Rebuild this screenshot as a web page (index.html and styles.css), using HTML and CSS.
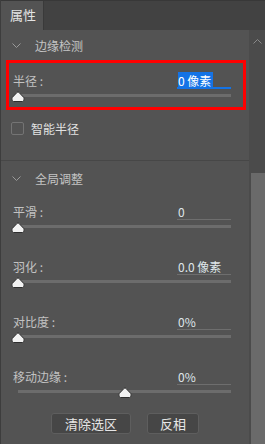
FILE: index.html
```html
<!DOCTYPE html>
<html lang="zh-CN">
<head>
    <meta charset="UTF-8">
    <meta name="viewport" content="width=device-width, initial-scale=1.0">
    <title>属性</title>
    <link rel="stylesheet" href="styles.css">
</head>
<body>
    <div class="panel">
        <!-- Tab -->
        <div class="tabbar">
            <div class="tab">属性</div>
        </div>

        <div class="panel-body">
            <div class="content">
                <!-- 边缘检测 -->
                <div class="section-head">
                    <svg class="chevron" width="9" height="5" viewBox="0 0 9 5"><polyline points="0.5,0.5 4.5,4.5 8.5,0.5" fill="none" stroke="#9a9a9a" stroke-width="1"/></svg>
                    <span>边缘检测</span>
                </div>

                <div class="highlight">
                    <div class="field field-boxed">
                        <div class="field-top">
                            <span class="label">半径 :</span>
                            <span class="value value-active"><span class="selected">0 像素</span></span>
                        </div>
                        <div class="slider">
                            <div class="track"></div>
                            <svg class="thumb" style="left: 0%" width="13" height="11" viewBox="0 0 13 11"><path d="M6.5 1 Q7 1 7.6 1.6 L12 6.2 Q12.5 6.7 12.5 7.5 V9 Q12.5 10.5 11 10.5 H2 Q0.5 10.5 0.5 9 V7.5 Q0.5 6.7 1 6.2 L5.4 1.6 Q6 1 6.5 1Z" fill="#f2f2f2" stroke="#2e2e2e"/></svg>
                        </div>
                    </div>
                </div>

                <div class="check-row">
                    <span class="checkbox"></span>
                    <span>智能半径</span>
                </div>

                <div class="divider"></div>

                <!-- 全局调整 -->
                <div class="section-head section-head-tall">
                    <svg class="chevron" width="9" height="5" viewBox="0 0 9 5"><polyline points="0.5,0.5 4.5,4.5 8.5,0.5" fill="none" stroke="#9a9a9a" stroke-width="1"/></svg>
                    <span>全局调整</span>
                </div>

                <div class="fields" id="fields"></div>

                <div class="buttons">
                    <button class="btn btn-wide">清除选区</button>
                    <button class="btn">反相</button>
                </div>
            </div>

            <div class="scrollbar">
                <svg class="scroll-up" width="9" height="5" viewBox="0 0 9 5"><polyline points="0.5,4.5 4.5,0.5 8.5,4.5" fill="none" stroke="#8a8a8a" stroke-width="1"/></svg>
                <div class="scroll-thumb"></div>
            </div>
        </div>
    </div>

    <script>
        // Daftar slider di bagian 全局调整
        const fieldList = [
            { label: "平滑 :", value: "0", pos: 0 },
            { label: "羽化 :", value: "0.0 像素", pos: 0 },
            { label: "对比度 :", value: "0%", pos: 0 },
            { label: "移动边缘 :", value: "0%", pos: 50 }
        ];

        const thumbSvg = '<path d="M6.5 1 Q7 1 7.6 1.6 L12 6.2 Q12.5 6.7 12.5 7.5 V9 Q12.5 10.5 11 10.5 H2 Q0.5 10.5 0.5 9 V7.5 Q0.5 6.7 1 6.2 L5.4 1.6 Q6 1 6.5 1Z" fill="#f2f2f2" stroke="#2e2e2e"/>';

        function tampilkanFields() {
            const wrap = document.getElementById('fields');
            fieldList.forEach(f => {
                const item = document.createElement('div');
                item.className = 'field';
                item.innerHTML = `
                    <div class="field-top">
                        <span class="label">${f.label}</span>
                        <span class="value">${f.value}</span>
                    </div>
                    <div class="slider">
                        <div class="track"></div>
                        <svg class="thumb" style="left: ${f.pos}%" width="13" height="11" viewBox="0 0 13 11">${thumbSvg}</svg>
                    </div>
                `;
                wrap.appendChild(item);
            });
        }

        tampilkanFields();
    </script>
</body>
</html>
```

FILE: styles.css
```css
body {
    margin: 0;
    width: 265px;
    height: 444px;
    overflow: hidden;
    background-color: #535353;
    font-family: "Noto Sans CJK SC", "Noto Sans", sans-serif;
    font-size: 12px;
}
.panel {
    height: 444px;
    display: flex;
    flex-direction: column;
    border-left: 1px solid #3d3d3d;
}
.tabbar {
    height: 30px;
    flex: none;
    display: flex;
    background-color: #424242;
    border-top: 1px solid #383838;
    box-sizing: border-box;
}
.tab {
    width: 43px;
    background-color: #535353;
    color: #e4e4e4;
    font-size: 13px;
    padding-left: 9px;
    line-height: 28px;
    box-sizing: border-box;
    border-right: 1px solid #3a3a3a;
}
.panel-body {
    flex: 1;
    display: flex;
}
.content {
    width: 248px;
}
.section-head {
    height: 30px;
    display: flex;
    align-items: center;
    color: #c4c4c4;
    font-size: 12px;
}
.section-head-tall {
    height: 34px;
}
.chevron {
    margin-left: 11px;
    margin-right: 14px;
}
.highlight {
    height: 50px;
    margin-left: 5px;
    width: 240px;
    border: 3px solid #ff0000;
    box-sizing: border-box;
    padding-top: 10px;
}
.field {
    padding: 0 18px 0 12px;
    margin-bottom: 27px;
}
.field-boxed {
    padding: 0 12px 0 4px;
    margin-bottom: 0;
}
.field-top {
    height: 16px;
    display: flex;
    justify-content: space-between;
    align-items: flex-start;
}
.label {
    color: #c2c2c2;
    line-height: 16px;
}
.value {
    width: 54px;
    height: 16px;
    box-sizing: border-box;
    border-bottom: 1px solid #6e6e6e;
    color: #dfe6ea;
    line-height: 15px;
    padding-left: 1px;
}
.value-active {
    border-bottom: 2px solid #1473e6;
}
.selected {
    background-color: #1473e6;
    color: #ffffff;
    padding-right: 2px;
}
.slider {
    position: relative;
    height: 12px;
    box-sizing: border-box;
    padding-top: 5px;
    margin-left: 5px;
}
.track {
    height: 3px;
    background-color: #6c6c6c;
}
.thumb {
    position: absolute;
    top: 2px;
    transform: translateX(-50%);
}
.check-row {
    height: 36px;
    margin-bottom: 14px;
    display: flex;
    align-items: center;
    color: #e2e2e2;
    padding-left: 10px;
}
.checkbox {
    width: 13px;
    height: 13px;
    box-sizing: border-box;
    border: 1px solid #747474;
    border-radius: 2px;
    margin-right: 7px;
}
.divider {
    height: 1px;
    background-color: #474747;
}
.fields {
    padding-top: 9px;
}
.fields .field:last-child {
    margin-bottom: 0;
}
.buttons {
    margin-top: 16px;
    display: flex;
    justify-content: center;
    gap: 16px;
}
.btn {
    height: 21px;
    width: 52px;
    padding: 0;
    background-color: #464646;
    color: #e6e6e6;
    border: 1px solid #5e5e5e;
    border-radius: 3px;
    font-family: "Noto Sans CJK SC", "Noto Sans", sans-serif;
    font-size: 13px;
    line-height: 18px;
}
.btn-wide {
    width: 80px;
}
.scrollbar {
    width: 16px;
    background-color: #4b4b4b;
    position: relative;
    display: flex;
    flex-direction: column;
    align-items: center;
}
.scroll-up {
    margin-top: 9px;
    margin-left: 1px;
}
.scroll-thumb {
    position: absolute;
    top: 143px;
    left: 2px;
    right: 0;
    bottom: 0;
    background-color: #6a6a6a;
}
```
